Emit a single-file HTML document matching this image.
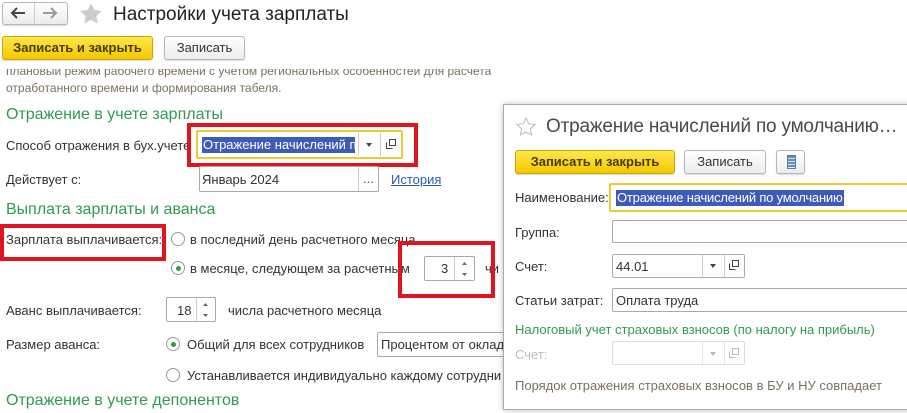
<!DOCTYPE html>
<html><head><meta charset="utf-8"><style>
*{box-sizing:border-box;margin:0;padding:0}
body{width:907px;height:413px;overflow:hidden;background:#fff;font-family:"Liberation Sans",Arial,sans-serif;font-size:13px;color:#333;position:relative}
.a{position:absolute;white-space:nowrap}
.g{color:#2f9a52;font-size:16px}
.btn{position:absolute;border:1px solid #b8b8b8;border-radius:3px;background:linear-gradient(#fff,#ececec);text-align:center;font-size:13px;color:#333;box-shadow:0 1px 1px rgba(0,0,0,.15)}
.y{background:linear-gradient(#ffe74a,#f2c800);border-color:#c8a800;font-weight:bold;color:#4a3a00}
.in{position:absolute;border:1px solid #aaa;border-radius:2px;background:#fff}
.red{position:absolute;border:4px solid #e0141e}
.rad{position:absolute;width:14px;height:14px;border:1px solid #999;border-radius:50%;background:#fff}
.rad.on::after{content:"";position:absolute;left:4px;top:4px;width:5px;height:5px;border-radius:50%;background:#2a9a52}
.sel{background:#3f5bb8;color:#fff}
.dv{position:absolute;top:0;bottom:0;border-left:1px solid #ccc}
</style></head><body>
<div class="btn" style="left:2px;top:2px;width:66px;height:23px"></div>
<div class="a" style="left:34px;top:3px;height:21px;border-left:1px solid #ccc"></div>
<svg class="a" style="left:10px;top:7px" width="16" height="12"><path d="M15 6H3M7 1L2 6l5 5" stroke="#444" stroke-width="2" fill="none"/></svg>
<svg class="a" style="left:42px;top:7px" width="16" height="12"><path d="M1 6h12M9 1l5 5-5 5" stroke="#999" stroke-width="2" fill="none"/></svg>
<svg class="a" style="left:79px;top:2px" width="24" height="23"><path d="M12 1l3.3 7 7.6.9-5.6 5.2 1.5 7.5L12 17.9l-6.8 3.7 1.5-7.5L1.1 8.9l7.6-.9z" fill="#ccc"/></svg>
<div class="a" style="left:113px;top:4px;font-size:19px;color:#222">Настройки учета зарплаты</div>
<div class="btn y" style="left:2px;top:36px;width:151px;height:24px;line-height:22px">Записать и закрыть</div>
<div class="btn" style="left:164px;top:36px;width:81px;height:24px;line-height:22px">Записать</div>
<div class="a" style="left:6px;top:64px;font-size:12px;color:#7a7060;clip-path:inset(5px 0 0 0)">плановый режим рабочего времени с учетом региональных особенностей для расчета</div>
<div class="a" style="left:6px;top:81px;font-size:12px;color:#7a7060">отработанного времени и формирования табеля.</div>
<div class="a g" style="left:6px;top:106px">Отражение в учете зарплаты</div>
<div class="a" style="left:6px;top:138px">Способ отражения в бух.учете</div>
<div class="red" style="left:187px;top:123px;width:231px;height:44px"></div>
<div class="in" style="left:196px;top:130px;width:207px;height:29px;border:2px solid #f0c830;background:#fff"></div>
<div class="a sel" style="left:202px;top:137px;width:153px;height:16px;line-height:16px;overflow:hidden;padding-left:1px">Отражение начислений по</div>
<div class="a" style="left:358px;top:133px;height:23px;border-left:1px solid #ccc"></div>
<div class="a" style="left:380px;top:133px;height:23px;border-left:1px solid #ccc"></div>
<svg class="a" style="left:366px;top:143px" width="6" height="4"><path d="M0 0h6L3 4z" fill="#444"/></svg>
<svg class="a" style="left:386px;top:139px" width="10" height="10"><path d="M3.5 .5h6v6h-6zM.5 3.5v6h6" stroke="#444" fill="none"/></svg>
<div class="a" style="left:6px;top:172px">Действует с:</div>
<div class="in" style="left:199px;top:166px;width:180px;height:26px"></div>
<div class="a" style="left:202px;top:172px">Январь 2024</div>
<div class="a" style="left:358px;top:167px;height:24px;border-left:1px solid #ccc"></div>
<div class="a" style="left:363px;top:171px;color:#555">...</div>
<div class="a" style="left:391px;top:172px;color:#2a5ab8;text-decoration:underline">История</div>
<div class="a g" style="left:6px;top:201px">Выплата зарплаты и аванса</div>
<div class="red" style="left:0;top:224px;width:166px;height:37px"></div>
<div class="a" style="left:6px;top:232px">Зарплата выплачивается:</div>
<div class="rad" style="left:171px;top:232px"></div>
<div class="a" style="left:190px;top:232px">в последний день расчетного месяца</div>
<div class="rad on" style="left:171px;top:261px"></div>
<div class="a" style="left:190px;top:261px">в месяце, следующем за расчетным</div>
<div class="a" style="left:485px;top:261px">чи</div>
<div class="in" style="left:424px;top:256px;width:51px;height:25px"></div>
<div class="a" style="left:441px;top:261px">3</div>
<div class="a" style="left:454px;top:257px;height:23px;border-left:1px solid #ccc"></div>
<svg class="a" style="left:462px;top:262px" width="5" height="14"><path d="M0 3L2.5 0 5 3zM0 11h5l-2.5 3z" fill="#666"/></svg>
<div class="red" style="left:398px;top:241px;width:97px;height:57px"></div>
<div class="a" style="left:6px;top:303px">Аванс выплачивается:</div>
<div class="in" style="left:166px;top:297px;width:50px;height:25px"></div>
<div class="a" style="left:177px;top:303px">18</div>
<div class="a" style="left:196px;top:298px;height:23px;border-left:1px solid #ccc"></div>
<svg class="a" style="left:203px;top:303px" width="5" height="14"><path d="M0 3L2.5 0 5 3zM0 11h5l-2.5 3z" fill="#666"/></svg>
<div class="a" style="left:228px;top:303px">числа расчетного месяца</div>
<div class="a" style="left:6px;top:337px">Размер аванса:</div>
<div class="rad on" style="left:166px;top:337px"></div>
<div class="a" style="left:187px;top:337px">Общий для всех сотрудников</div>
<div class="in" style="left:377px;top:332px;width:140px;height:25px"></div>
<div class="a" style="left:381px;top:337px">Процентом от оклад</div>
<div class="rad" style="left:166px;top:368px"></div>
<div class="a" style="left:187px;top:368px">Устанавливается индивидуально каждому сотрудни</div>
<div class="a g" style="left:6px;top:392px">Отражение в учете депонентов</div>

<div class="a" style="left:503px;top:104px;width:410px;height:306px;border:1px solid #aaa;background:#fff;box-shadow:0 0 6px rgba(0,0,0,.25)"></div>
<svg class="a" style="left:516px;top:117px" width="20" height="19"><path d="M10 1l2.7 5.7 6.3.8-4.6 4.3 1.2 6.2L10 15l-5.6 3 1.2-6.2L1 7.5l6.3-.8z" stroke="#bbb" fill="none"/></svg>
<div class="a" style="left:546px;top:116px;font-size:19px;color:#4a4a4a;letter-spacing:-.2px">Отражение начислений по умолчанию…</div>
<div class="btn y" style="left:515px;top:150px;width:160px;height:24px;line-height:22px">Записать и закрыть</div>
<div class="btn" style="left:684px;top:150px;width:82px;height:24px;line-height:22px">Записать</div>
<div class="btn" style="left:776px;top:150px;width:29px;height:24px"></div>
<div class="a" style="left:787px;top:155px;width:9px;height:14px;background:repeating-linear-gradient(#6a8ab8 0 2px,#dfe6f0 2px 3px);border:1px solid #5a7aa8"></div>
<div class="a" style="left:515px;top:190px">Наименование:</div>
<div class="in" style="left:609px;top:183px;width:310px;height:29px;border:2px solid #f0c830"></div>
<div class="a sel" style="left:616px;top:190px;height:16px;line-height:16px;padding:0 1px;letter-spacing:-.2px">Отражение начислений по умолчанию</div>
<div class="a" style="left:515px;top:225px">Группа:</div>
<div class="in" style="left:612px;top:220px;width:310px;height:23px"></div>
<div class="a" style="left:515px;top:259px">Счет:</div>
<div class="in" style="left:612px;top:254px;width:133px;height:24px"><div class="dv" style="left:89px"></div><div class="dv" style="left:111px"></div></div>
<div class="a" style="left:616px;top:259px">44.01</div>
<svg class="a" style="left:710px;top:264px" width="6" height="4"><path d="M0 0h6L3 4z" fill="#444"/></svg>
<svg class="a" style="left:729px;top:260px" width="10" height="10"><path d="M3.5 .5h6v6h-6zM.5 3.5v6h6" stroke="#444" fill="none"/></svg>
<div class="a" style="left:515px;top:293px">Статьи затрат:</div>
<div class="in" style="left:612px;top:288px;width:310px;height:24px"></div>
<div class="a" style="left:616px;top:293px">Оплата труда</div>
<div class="a" style="left:515px;top:322px;color:#2f9a52">Налоговый учет страховых взносов (по налогу на прибыль)</div>
<div class="a" style="left:515px;top:347px;color:#bbb">Счет:</div>
<div class="in" style="left:612px;top:341px;width:133px;height:24px;border-color:#ddd"><div class="dv" style="left:89px;border-color:#e5e5e5"></div><div class="dv" style="left:111px;border-color:#e5e5e5"></div></div>
<svg class="a" style="left:710px;top:352px" width="6" height="4"><path d="M0 0h6L3 4z" fill="#bbb"/></svg>
<svg class="a" style="left:729px;top:348px" width="10" height="10"><path d="M3.5 .5h6v6h-6zM.5 3.5v6h6" stroke="#bbb" fill="none"/></svg>
<div class="a" style="left:515px;top:378px;color:#7a7060">Порядок отражения страховых взносов в БУ и НУ совпадает</div>
</body></html>
